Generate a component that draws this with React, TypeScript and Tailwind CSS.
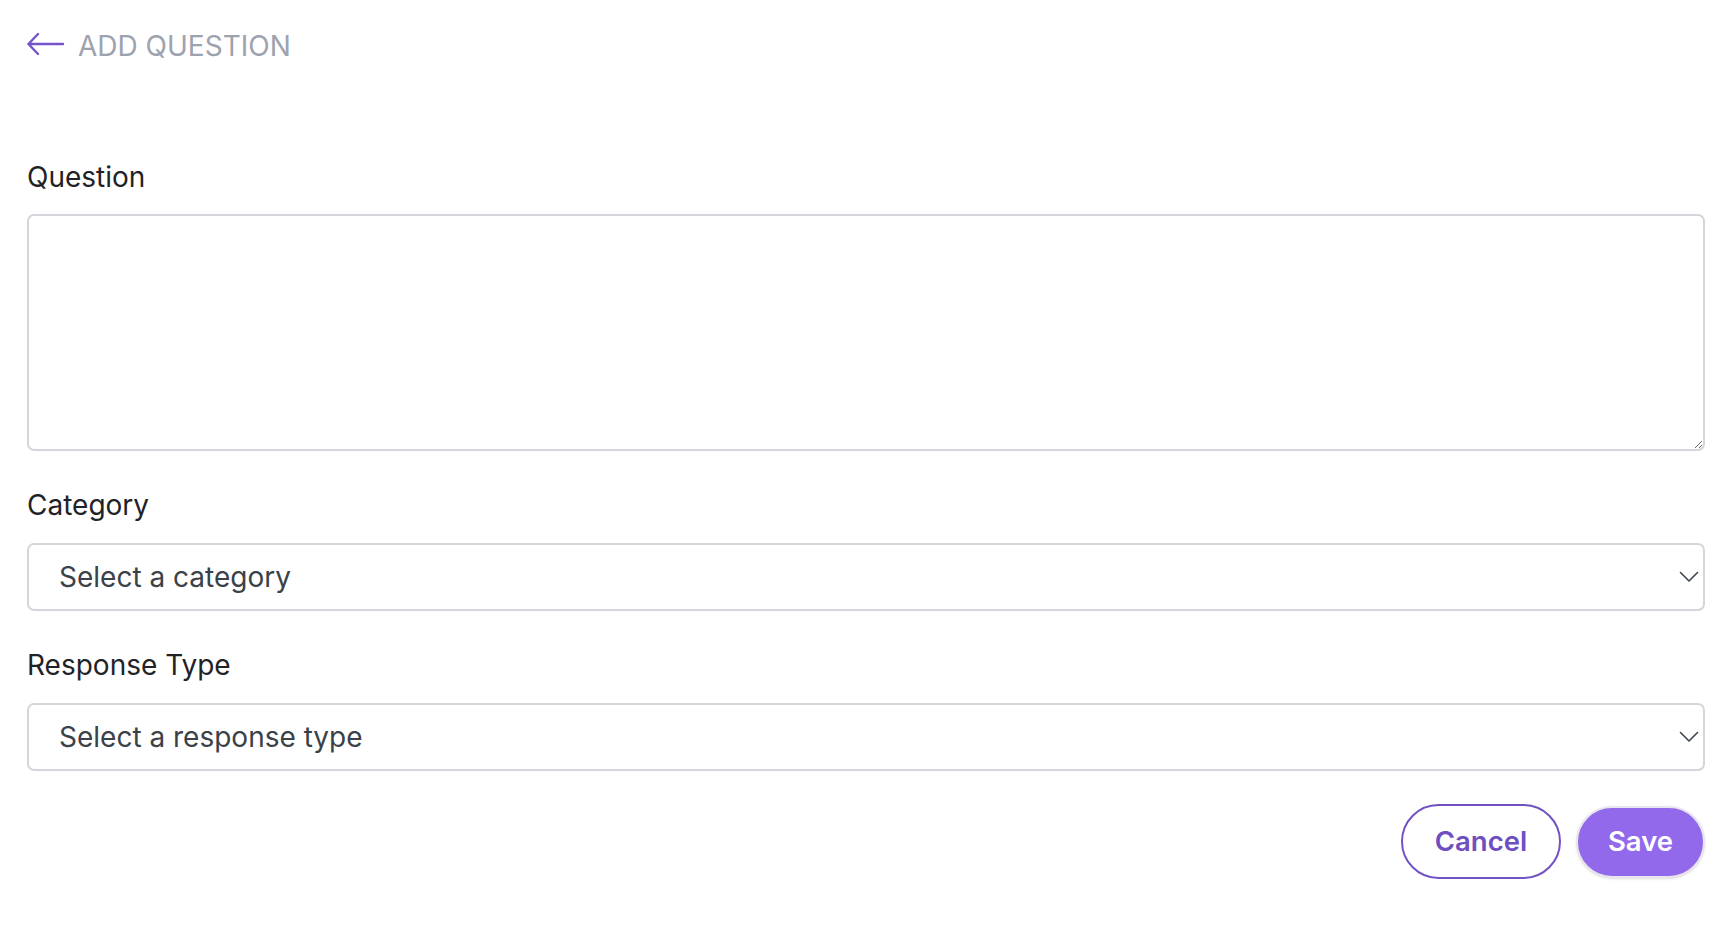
import React from "react";

function Chevron() {
  return (
    <svg width="20" height="12" viewBox="0 0 20 12" fill="none" className="pointer-events-none">
      <path d="M1.5 1.5 L10 10 L18.5 1.5" stroke="#3f4650" strokeWidth="1.6" strokeLinecap="round" strokeLinejoin="round" />
    </svg>
  );
}

function SelectBox({ placeholder }: { placeholder: string }) {
  return (
    <div className="flex h-[68px] w-full items-center justify-between rounded-[7px] border-2 border-[#d3d6db] bg-white pl-[30px] pr-[4px]">
      <span className="text-[28px] leading-[36px] text-[#3b4149]">{placeholder}</span>
      <Chevron />
    </div>
  );
}

export default function App() {
  return (
    <div
      className="min-h-[934px] w-full bg-white px-[27px] pt-[28px]"
      style={{ fontFamily: "Inter, 'Noto Sans', sans-serif" }}
    >
      <div className="flex items-center">
        <svg width="38" height="24" viewBox="0 0 38 24" fill="none" className="mt-[-5px] shrink-0">
          <path d="M11 2 L1.5 12 L11 22 M1.5 12 H36" stroke="#7653c9" strokeWidth="2.4" strokeLinecap="round" strokeLinejoin="round" />
        </svg>
        <h1 className="ml-[13px] text-[28px] font-normal leading-[36px] text-[#9da3ae]">ADD QUESTION</h1>
      </div>

      <div className="mt-[95px] flex flex-col">
        <label className="text-[28px] leading-[36px] text-[#1f2328]">Question</label>
        <textarea className="mt-[19px] h-[237px] w-full resize-y rounded-[7px] border-2 border-[#d3d6db] bg-white outline-none" />

        <label className="mt-[36px] text-[28px] leading-[36px] text-[#1f2328]">Category</label>
        <div className="mt-[20px]">
          <SelectBox placeholder="Select a category" />
        </div>

        <label className="mt-[36px] text-[28px] leading-[36px] text-[#1f2328]">Response Type</label>
        <div className="mt-[20px]">
          <SelectBox placeholder="Select a response type" />
        </div>

        <div className="mt-[33px] flex items-center justify-end gap-[15px]">
          <button className="flex h-[75px] w-[160px] items-center justify-center rounded-full border-2 border-[#7252c2] bg-white text-[27.5px] font-semibold leading-none text-[#6f4fc0]">
            Cancel
          </button>
          <button className="flex h-[72px] w-[129px] items-center justify-center rounded-full border-2 border-[#e8e5ee] bg-[#9169ea] text-[27.5px] font-semibold leading-none text-white shadow-sm">
            Save
          </button>
        </div>
      </div>
    </div>
  );
}
